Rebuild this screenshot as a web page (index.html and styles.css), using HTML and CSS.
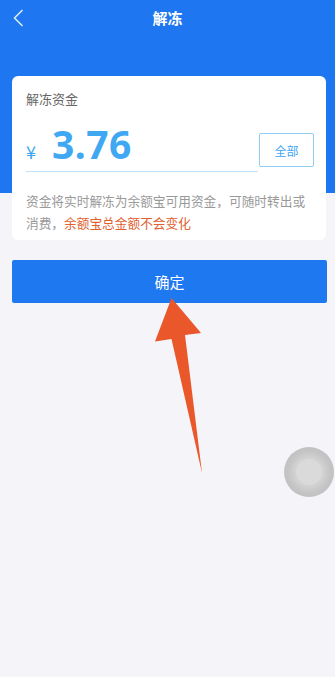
FILE: index.html
```html
<!DOCTYPE html>
<html lang="zh-CN">
<head>
    <meta charset="UTF-8">
    <meta name="viewport" content="width=device-width, initial-scale=1.0">
    <title>解冻</title>
    <link rel="stylesheet" href="styles.css">
</head>
<body>
    <div class="nav">
        <svg class="back" width="12" height="18" viewBox="0 0 12 18">
            <path d="M10 1.5 L2.5 9 L10 16.5" fill="none" stroke="#d6e8ff" stroke-width="1.7" stroke-linecap="round" stroke-linejoin="round"/>
        </svg>
        <h1 class="title">解冻</h1>
    </div>

    <div class="card">
        <div class="label">解冻资金</div>
        <div class="amount-row">
            <div class="amount">
                <span class="currency">¥</span>
                <span class="value">3.76</span>
            </div>
            <button class="all-btn">全部</button>
        </div>
        <div class="note">
            <div class="note-line">资金将实时解冻为余额宝可用资金，可随时转出或</div>
            <div class="note-line"><span>消费，</span><span class="warn">余额宝总金额不会变化</span></div>
        </div>
    </div>

    <button class="confirm">确定</button>

    <!-- annotation arrow pointing at the button -->
    <svg class="arrow" width="335" height="677" viewBox="0 0 335 677">
        <polygon points="171.5,298 201,333 185,335 202,473 171.5,339 155,341.5" fill="#e9572a"/>
    </svg>

    <div class="float-ball"><div class="float-core"></div></div>
</body>
</html>
```

FILE: styles.css
```css
* {
    margin: 0;
    padding: 0;
    box-sizing: border-box;
}

body {
    font-family: "Noto Sans CJK SC", "Noto Sans", sans-serif;
    background: linear-gradient(#1e76f0 193px, #f5f4f8 193px);
    height: 677px;
    overflow: hidden;
    position: relative;
}

.nav {
    height: 36px;
    display: flex;
    align-items: center;
    justify-content: center;
    position: relative;
}

.back {
    position: absolute;
    left: 12px;
    top: 9px;
}

.title {
    color: #fff;
    font-size: 15px;
    font-weight: 700;
    line-height: 36px;
}

.card {
    margin: 40px 9px 0 12px;
    background: #fff;
    border-radius: 6px;
    padding: 14px 12px 6px 14px;
}

.label {
    font-size: 13px;
    color: #666;
    line-height: 18px;
}

.amount-row {
    display: flex;
    align-items: flex-end;
    margin-top: 17px;
}

.amount {
    flex: 1;
    display: flex;
    align-items: baseline;
    border-bottom: 1px solid #bfe0f8;
    height: 47px;
    margin-right: 1px;
}

.currency {
    font-size: 18px;
    color: #3fa6f2;
    margin-right: 16px;
    line-height: 38px;
}

.value {
    font-family: "Noto Sans", sans-serif;
    font-size: 39px;
    font-weight: 700;
    color: #40a8f3;
    line-height: 38px;
    letter-spacing: 0.5px;
}

.all-btn {
    width: 55px;
    height: 34px;
    margin-bottom: 5px;
    background: #fff;
    border: 1px solid #8fcdf3;
    border-radius: 2px;
    color: #3fa6f2;
    font-family: inherit;
    font-size: 12px;
}

.note {
    margin-top: 18px;
    font-size: 12.7px;
    line-height: 22px;
    color: #999;
}

.note-line {
    white-space: nowrap;
}

.warn {
    color: #e0602e;
}

.confirm {
    display: block;
    margin: 20px 8px 0 12px;
    width: 315px;
    height: 43px;
    background: #1e78f0;
    border: none;
    border-radius: 2px;
    color: #fff;
    font-family: inherit;
    font-size: 15px;
}

.arrow {
    position: absolute;
    left: 0;
    top: 0;
    pointer-events: none;
}

.float-ball {
    position: absolute;
    left: 284px;
    top: 447px;
    width: 50px;
    height: 50px;
    border-radius: 50%;
    background: radial-gradient(circle, #d2d2d2 40%, #c4c4c4 60%, #bababa 100%);
    display: flex;
    align-items: center;
    justify-content: center;
}

.float-core {
    width: 26px;
    height: 26px;
    border-radius: 50%;
    background: #dadada;
}
```
